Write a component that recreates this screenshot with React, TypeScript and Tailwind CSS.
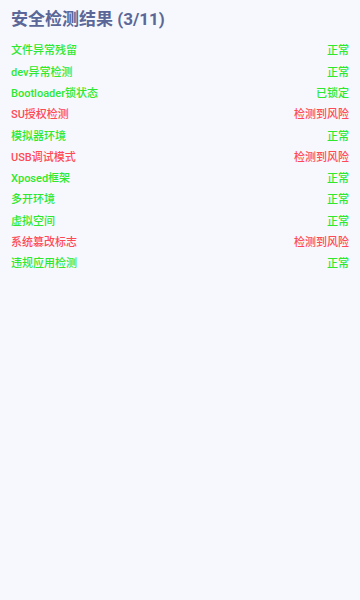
import React from "react";

const items: [string, string, boolean][] = [
  ["文件异常残留", "正常", true],
  ["dev异常检测", "正常", true],
  ["Bootloader锁状态", "已锁定", true],
  ["SU授权检测", "检测到风险", false],
  ["模拟器环境", "正常", true],
  ["USB调试模式", "检测到风险", false],
  ["Xposed框架", "正常", true],
  ["多开环境", "正常", true],
  ["虚拟空间", "正常", true],
  ["系统篡改标志", "检测到风险", false],
  ["违规应用检测", "正常", true],
];

export default function App() {
  return (
    <div
      className="w-[360px] h-[600px] bg-[#f7f8fd] px-[11px] pt-[9px]"
      style={{ fontFamily: 'Roboto, "Noto Sans CJK SC", sans-serif' }}
    >
      <div className="text-[17px] leading-[21px] font-bold text-[#5a6798] mb-[11px]">
        安全检测结果 (3/11)
      </div>
      <div className="flex flex-col">
        {items.map(([label, status, ok]) => (
          <div
            key={label}
            className={`flex justify-between items-center h-[21.3px] text-[11px] font-medium ${
              ok ? "text-[#2ee82e]" : "text-[#ff4a55]"
            }`}
          >
            <span>{label}</span>
            <span>{status}</span>
          </div>
        ))}
      </div>
    </div>
  );
}
